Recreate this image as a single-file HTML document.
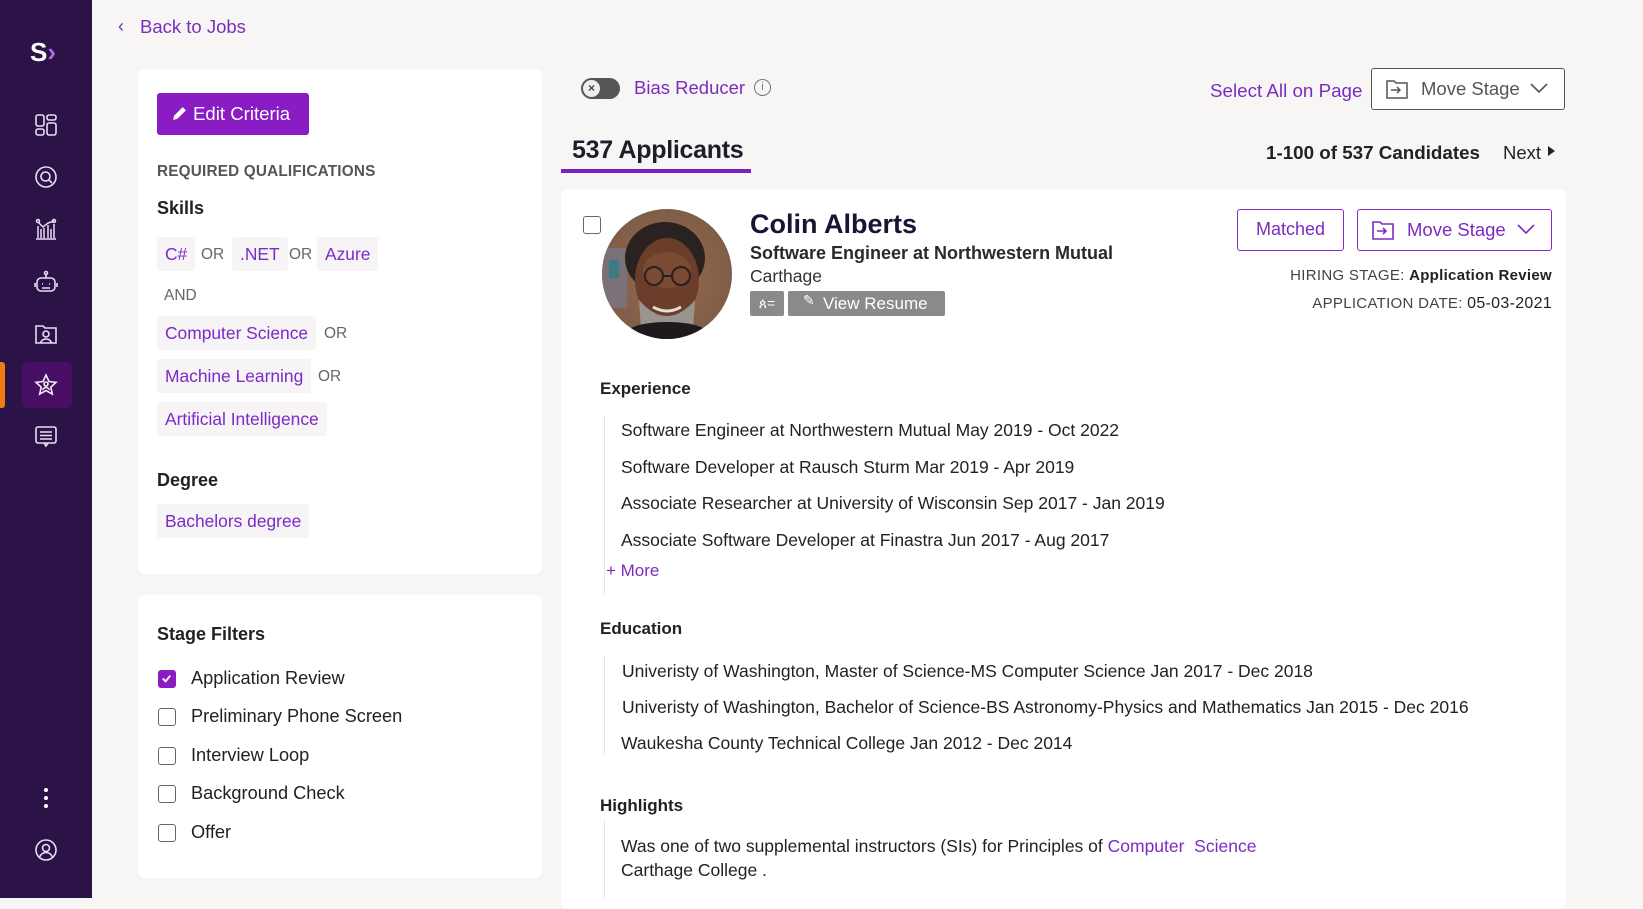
<!DOCTYPE html>
<html><head><meta charset="utf-8"><style>
*{margin:0;padding:0;box-sizing:border-box}
body{width:1643px;height:898px;overflow:hidden;background:#f8f6f4;font-family:"Liberation Sans",sans-serif;color:#1d1d2b;position:relative}
.a{position:absolute;white-space:nowrap}
.side{position:absolute;left:0;top:0;width:92px;height:898px;background:#2b1247}
.ic{position:absolute;left:34px;width:24px;height:24px}
.card{position:absolute;background:#fff;border-radius:6px}
.chip{position:absolute;height:34px;line-height:34px;padding:0 8px;background:#f6f4f5;color:#7d2ac9;font-size:17.4px;border-radius:3px}
.or{position:absolute;color:#666;font-size:15.5px}
.cb{position:absolute;left:158px;width:18px;height:18px;border:1.6px solid #666;border-radius:3px}
.st{position:absolute;left:191px;font-size:18.2px;color:#222}
.it{position:absolute;left:621px;font-size:17.5px;color:#222}
.sec{position:absolute;left:600px;font-size:17px;font-weight:bold;color:#222}
</style></head><body>
<div class="side">
  <div class="a" style="left:30px;top:37px;font-size:26px;font-weight:bold;color:#fff">S<span style="color:#b46be8">›</span></div>
  <svg class="ic" style="top:113px" viewBox="0 0 24 24" fill="none" stroke="#e8dcf3" stroke-width="1.6"><rect x="2" y="2" width="8" height="11" rx="2"/><rect x="13" y="2" width="9" height="5" rx="2"/><rect x="2" y="16" width="8" height="6" rx="2"/><rect x="13" y="10" width="9" height="12" rx="2"/></svg>
  <svg class="ic" style="top:165px" viewBox="0 0 24 24" fill="none" stroke="#e8dcf3" stroke-width="1.6"><circle cx="12" cy="12" r="10"/><circle cx="11.5" cy="11.5" r="4.5"/><path d="M15 15l3 3"/></svg>
  <svg class="ic" style="top:216px" viewBox="0 0 24 24" fill="none" stroke="#e8dcf3" stroke-width="1.5"><path d="M2 23h20M4 22V10M7 22V13M10 22V12M14 22V9M17 22V13M20 22V8M4 6l5 5 5-4 6-2"/><circle cx="4" cy="5" r="1.5"/><circle cx="20" cy="5" r="1.5"/></svg>
  <svg class="ic" style="top:270px" viewBox="0 0 24 24" fill="none" stroke="#e8dcf3" stroke-width="1.6"><circle cx="12" cy="3" r="1.5"/><path d="M12 4.5V8"/><rect x="3" y="8" width="18" height="13" rx="4"/><path d="M1 13v4M23 13v4M8 14h1M15 14h1M8 18h8"/></svg>
  <svg class="ic" style="top:321px" viewBox="0 0 24 24" fill="none" stroke="#e8dcf3" stroke-width="1.6"><path d="M2 5h7l2 2h11v15H2z"/><circle cx="12" cy="13" r="3"/><path d="M6.5 22c1-3 3-4 5.5-4s4.5 1 5.5 4"/></svg>
  <div style="position:absolute;left:0;top:362px;width:5px;height:46px;background:#f07b13;border-radius:0 3px 3px 0"></div>
  <div style="position:absolute;left:22px;top:362px;width:50px;height:46px;background:#470e63;border-radius:5px"></div>
  <svg class="ic" style="top:373px" viewBox="0 0 24 24" fill="none" stroke="#f2eaf8" stroke-width="1.6"><path d="M12 2l3 6.5 7 .8-5.2 4.8 1.5 7L12 17.6 5.7 21.1l1.5-7L2 9.3l7-.8z"/><circle cx="12" cy="11" r="2"/><path d="M8.5 17c1-2 2-2.5 3.5-2.5s2.5.5 3.5 2.5"/></svg>
  <svg class="ic" style="top:425px" viewBox="0 0 24 24" fill="none" stroke="#e8dcf3" stroke-width="1.6"><rect x="2" y="2" width="20" height="16" rx="2"/><path d="M6 7h12M6 10.5h12M6 14h12M10 18l2 3 2-3"/></svg>
  <div class="a" style="left:44px;top:788px;width:4px;height:4px;border-radius:50%;background:#fff;box-shadow:0 8px 0 #fff,0 16px 0 #fff"></div>
  <svg class="ic" style="top:838px" viewBox="0 0 24 24" fill="none" stroke="#e8dcf3" stroke-width="1.6"><circle cx="12" cy="12" r="10"/><circle cx="12" cy="10" r="3.5"/><path d="M5.5 19c1.5-3 3.5-4.5 6.5-4.5s5 1.5 6.5 4.5"/></svg>
</div>

<div class="a" style="left:118px;top:16px;font-size:18px;color:#7b2cbf">‹</div>
<div class="a" style="left:140px;top:16px;font-size:18.5px;color:#7b2cbf">Back to Jobs</div>

<div class="card" style="left:138px;top:69px;width:404px;height:505px"></div>
<div class="a" style="left:157px;top:93px;width:152px;height:42px;background:#8a1cc4;border-radius:3px;color:#fff;font-size:18.6px;line-height:42px;padding-left:36px">Edit Criteria</div>
<svg class="a" style="left:171px;top:105px" width="17" height="17" viewBox="0 0 16 16"><path d="M2 14l1-4 8-8 3 3-8 8z" fill="#fff"/></svg>
<div class="a" style="left:157px;top:163px;font-size:15.3px;color:#555;font-weight:bold;letter-spacing:.2px">REQUIRED QUALIFICATIONS</div>
<div class="a" style="left:157px;top:198px;font-size:18px;font-weight:bold;color:#222">Skills</div>
<div class="chip" style="left:157px;top:237px">C#</div><div class="or" style="left:201px;top:246px">OR</div>
<div class="chip" style="left:232px;top:237px">.NET</div><div class="or" style="left:289px;top:246px">OR</div>
<div class="chip" style="left:317px;top:237px">Azure</div>
<div class="or" style="left:164px;top:287px">AND</div>
<div class="chip" style="left:157px;top:316px">Computer Science</div><div class="or" style="left:324px;top:325px">OR</div>
<div class="chip" style="left:157px;top:359px">Machine Learning</div><div class="or" style="left:318px;top:368px">OR</div>
<div class="chip" style="left:157px;top:402px">Artificial Intelligence</div>
<div class="a" style="left:157px;top:470px;font-size:18px;font-weight:bold;color:#222">Degree</div>
<div class="chip" style="left:157px;top:504px">Bachelors degree</div>

<div class="card" style="left:138px;top:595px;width:404px;height:283px"></div>
<div class="a" style="left:157px;top:624px;font-size:18px;font-weight:bold;color:#222">Stage Filters</div>
<div class="cb" style="top:670px;background:#8a1cc4;border-color:#8a1cc4"><svg width="15" height="15" viewBox="0 0 16 16" style="position:absolute;left:0;top:0"><path d="M4 8l3 3 5-6" stroke="#fff" stroke-width="2" fill="none"/></svg></div>
<div class="st" style="top:668px">Application Review</div>
<div class="cb" style="top:708px"></div><div class="st" style="top:706px">Preliminary Phone Screen</div>
<div class="cb" style="top:747px"></div><div class="st" style="top:745px">Interview Loop</div>
<div class="cb" style="top:785px"></div><div class="st" style="top:783px">Background Check</div>
<div class="cb" style="top:824px"></div><div class="st" style="top:822px">Offer</div>

<div class="a" style="left:581px;top:78px;width:39px;height:21px;border-radius:11px;background:#555"></div>
<div class="a" style="left:583px;top:80px;width:17px;height:17px;border-radius:50%;background:#eee;font-size:12px;line-height:17px;text-align:center;color:#444;font-weight:bold">×</div>
<div class="a" style="left:634px;top:77px;font-size:18.5px;color:#7b2cbf">Bias Reducer</div>
<div class="a" style="left:754px;top:79px;width:17px;height:17px;border:1.5px solid #777;border-radius:50%;font-size:11px;text-align:center;line-height:14px;color:#777">i</div>
<div class="a" style="left:1210px;top:80px;font-size:18.8px;color:#7b2cbf">Select All on Page</div>
<div class="a" style="left:1371px;top:68px;width:194px;height:42px;border:1.5px solid #555;border-radius:3px;background:#fff;font-size:18.5px;color:#555;line-height:39px;padding-left:49px">Move Stage</div>
<svg class="a" style="left:1386px;top:79px" width="22" height="20" viewBox="0 0 22 20" fill="none" stroke="#555" stroke-width="1.5"><path d="M1 2h7l2 2h11v15H1zM5 11h9M11 8l3 3-3 3"/></svg>
<svg class="a" style="left:1530px;top:83px" width="18" height="11" viewBox="0 0 18 11" fill="none" stroke="#555" stroke-width="1.6"><path d="M1 1l8 8 8-8"/></svg>

<div class="a" style="left:572px;top:136px;font-size:25px;font-weight:bold;color:#1d1d2b;letter-spacing:-.3px">537 Applicants</div>
<div class="a" style="left:561px;top:169px;width:190px;height:4px;background:#7b1fc0"></div>
<div class="a" style="left:1266px;top:142px;font-size:18.8px;font-weight:bold;color:#222">1-100 of 537 Candidates</div>
<div class="a" style="left:1503px;top:142px;font-size:18.5px;color:#222">Next</div>
<div class="a" style="left:1548px;top:146px;width:0;height:0;border-left:7px solid #222;border-top:5px solid transparent;border-bottom:5px solid transparent"></div>

<div class="card" style="left:561px;top:189px;width:1005px;height:720px"></div>
<div class="a" style="left:583px;top:216px;width:18px;height:18px;border:1.6px solid #666;border-radius:3px"></div>
<svg class="a" style="left:601px;top:208px" width="132" height="132" viewBox="0 0 132 132">
<defs><clipPath id="c"><circle cx="66" cy="66" r="65"/></clipPath><radialGradient id="g" cx=".5" cy=".5" r=".6"><stop offset="0" stop-color="#9a6a4a"/><stop offset="1" stop-color="#7a5a48"/></radialGradient></defs>
<g clip-path="url(#c)"><rect width="132" height="132" fill="url(#g)"/><rect x="0" y="40" width="26" height="60" fill="#7a7278"/><rect x="8" y="52" width="10" height="18" fill="#3a7b84"/>
<ellipse cx="64" cy="50" rx="40" ry="36" fill="#2a2220"/><ellipse cx="66" cy="72" rx="32" ry="42" fill="#6a3e2a"/><ellipse cx="66" cy="62" rx="24" ry="18" fill="#7a4a32"/>
<path d="M38 92q28 32 56 0l-2 30h-52z" fill="#9a948e"/><path d="M16 132q10-18 50-18t50 18z" fill="#1c1a1a"/>
<circle cx="53" cy="68" r="9" stroke="#2a2020" stroke-width="2" fill="none"/><circle cx="80" cy="68" r="9" stroke="#2a2020" stroke-width="2" fill="none"/><path d="M62 68h9" stroke="#222" stroke-width="2"/><path d="M52 99q14 8 28 0" stroke="#e8ddd5" stroke-width="3" fill="none"/></g></svg>

<div class="a" style="left:750px;top:209px;font-size:27px;font-weight:bold;color:#1d1236">Colin Alberts</div>
<div class="a" style="left:750px;top:243px;font-size:18px;font-weight:bold;color:#2a2a2a">Software Engineer at Northwestern Mutual</div>
<div class="a" style="left:750px;top:266px;font-size:17.5px;color:#333">Carthage</div>
<div class="a" style="left:750px;top:291px;width:34px;height:25px;background:#8a8a8a;border-radius:2px;color:#fff;font-size:14px;line-height:25px;text-align:center">ጰ=</div>
<div class="a" style="left:788px;top:291px;width:157px;height:25px;background:#8a8a8a;border-radius:2px;color:#fff;font-size:17px;line-height:25px;padding-left:35px">View Resume</div>
<div class="a" style="left:803px;top:292px;color:#fff;font-size:14px">✎</div>

<div class="a" style="left:1237px;top:209px;width:107px;height:42px;border:1.5px solid #8a2bc4;border-radius:3px;color:#7b2cbf;font-size:18px;line-height:39px;text-align:center">Matched</div>
<div class="a" style="left:1357px;top:209px;width:195px;height:42px;border:1.5px solid #8a2bc4;border-radius:3px;color:#7b2cbf;font-size:18.5px;line-height:39px;padding-left:49px">Move Stage</div>
<svg class="a" style="left:1372px;top:220px" width="22" height="20" viewBox="0 0 22 20" fill="none" stroke="#7b2cbf" stroke-width="1.6"><path d="M1 2h7l2 2h11v15H1zM5 11h9M11 8l3 3-3 3"/></svg>
<svg class="a" style="left:1517px;top:224px" width="18" height="11" viewBox="0 0 18 11" fill="none" stroke="#7b2cbf" stroke-width="1.6"><path d="M1 1l8 8 8-8"/></svg>
<div class="a" style="right:91px;top:267px;font-size:15px;color:#444;letter-spacing:.3px">HIRING STAGE: <span style="color:#222;font-weight:600">Application Review</span></div>
<div class="a" style="right:91px;top:295px;font-size:15px;color:#444;letter-spacing:.3px">APPLICATION DATE: <span style="color:#222;font-size:16px">05-03-2021</span></div>

<div class="a" style="left:604px;top:415px;width:1px;height:180px;background:#e6e6e6"></div>
<div class="a" style="left:604px;top:655px;width:1px;height:100px;background:#e6e6e6"></div>
<div class="a" style="left:604px;top:820px;width:1px;height:78px;background:#e6e6e6"></div>
<div class="sec" style="top:379px">Experience</div>
<div class="it" style="top:420px">Software Engineer at Northwestern Mutual May 2019 - Oct 2022</div>
<div class="it" style="top:457px">Software Developer at Rausch Sturm Mar 2019 - Apr 2019</div>
<div class="it" style="top:493px">Associate Researcher at University of Wisconsin Sep 2017 - Jan 2019</div>
<div class="it" style="top:530px">Associate Software Developer at Finastra Jun 2017 - Aug 2017</div>
<div class="a" style="left:606px;top:561px;font-size:17px;color:#7b2cbf">+ More</div>
<div class="sec" style="top:619px">Education</div>
<div class="it" style="left:622px;top:661px">Univeristy of Washington, Master of Science-MS Computer Science Jan 2017 - Dec 2018</div>
<div class="it" style="left:622px;top:697px">Univeristy of Washington, Bachelor of Science-BS Astronomy-Physics and Mathematics Jan 2015 - Dec 2016</div>
<div class="it" style="top:733px">Waukesha County Technical College Jan 2012 - Dec 2014</div>
<div class="sec" style="top:796px">Highlights</div>
<div class="it" style="top:836px">Was one of two supplemental instructors (SIs) for Principles of <span style="color:#7b2cbf">Computer&nbsp; Science</span></div>
<div class="it" style="top:860px">Carthage College .</div>
</body></html>
